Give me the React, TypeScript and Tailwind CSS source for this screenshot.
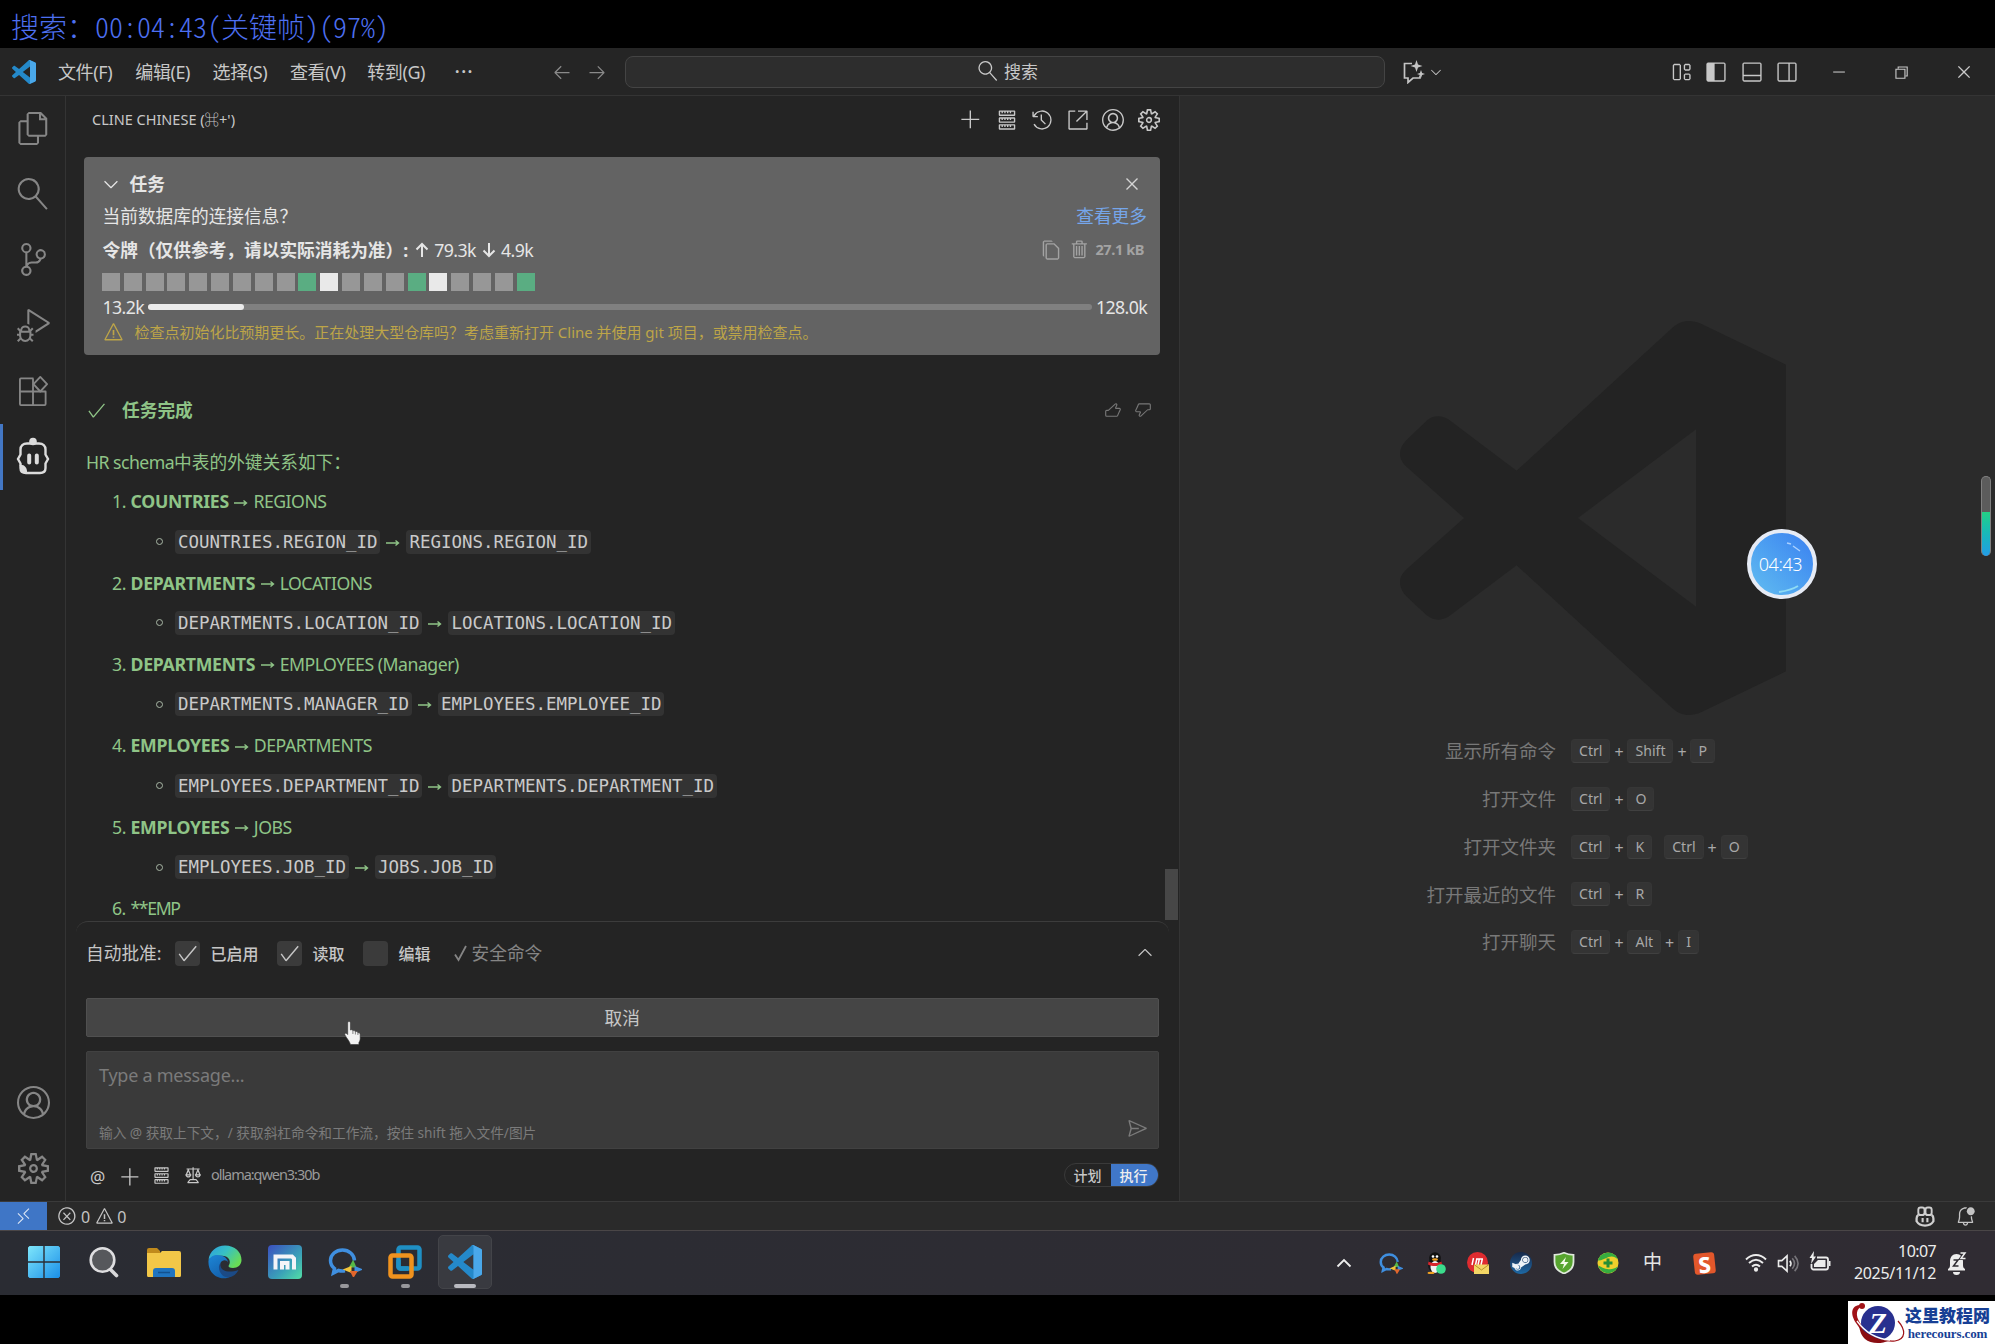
import classNames from 'clsx';
import type { ReactNode } from 'react';
import { FaSteamSymbol } from 'react-icons/fa';
import {
  VscAccount,
  VscAdd,
  VscArrowLeft,
  VscArrowRight,
  VscBellDot,
  VscCheck,
  VscChevronDown,
  VscChevronUp,
  VscChromeClose,
  VscChromeMinimize,
  VscChromeRestore,
  VscClose,
  VscCopy,
  VscDebugAlt,
  VscError,
  VscFiles,
  VscHistory,
  VscLaw,
  VscLayout,
  VscLayoutPanelOff,
  VscLayoutSidebarLeft,
  VscLayoutSidebarRightOff,
  VscLinkExternal,
  VscRemote,
  VscSearch,
  VscSend,
  VscServer,
  VscSettingsGear,
  VscSourceControl,
  VscThumbsdown,
  VscThumbsup,
  VscTrash,
  VscWarning,
} from 'react-icons/vsc';

type Relation = {
  from: string;
  to: string;
  source: string;
  target: string;
};

const relations: Relation[] = [
  {
    from: 'COUNTRIES',
    to: 'REGIONS',
    source: 'COUNTRIES.REGION_ID',
    target: 'REGIONS.REGION_ID',
  },
  {
    from: 'DEPARTMENTS',
    to: 'LOCATIONS',
    source: 'DEPARTMENTS.LOCATION_ID',
    target: 'LOCATIONS.LOCATION_ID',
  },
  {
    from: 'DEPARTMENTS',
    to: 'EMPLOYEES (Manager)',
    source: 'DEPARTMENTS.MANAGER_ID',
    target: 'EMPLOYEES.EMPLOYEE_ID',
  },
  {
    from: 'EMPLOYEES',
    to: 'DEPARTMENTS',
    source: 'EMPLOYEES.DEPARTMENT_ID',
    target: 'DEPARTMENTS.DEPARTMENT_ID',
  },
  {
    from: 'EMPLOYEES',
    to: 'JOBS',
    source: 'EMPLOYEES.JOB_ID',
    target: 'JOBS.JOB_ID',
  },
];

const shortcuts: { label: string; chords: string[][] }[] = [
  { label: '显示所有命令', chords: [['Ctrl', 'Shift', 'P']] },
  { label: '打开文件', chords: [['Ctrl', 'O']] },
  {
    label: '打开文件夹',
    chords: [
      ['Ctrl', 'K'],
      ['Ctrl', 'O'],
    ],
  },
  { label: '打开最近的文件', chords: [['Ctrl', 'R']] },
  { label: '打开聊天', chords: [['Ctrl', 'Alt', 'I']] },
];

// g = checkpoint, w = user message, everything else is a plain step
const timeline = 'xxxxxxxxxgwxxxgwxxxg'.split('');

const LOGO_OUTLINE =
  'M70.9 99.3c1.6.6 3.4.6 5-.2l20.6-9.9c2.1-1 3.5-3.2 3.5-5.6V16.4c0-2.4-1.4-4.6-3.5-5.6L75.9.9c-2.1-1-4.6-.8-6.4.5-.3.2-.5.4-.7.7L29.4 38 12.2 25c-1.6-1.2-3.8-1.1-5.3.2L1.4 30.3c-1.9 1.6-1.9 4.5 0 6.1L16.2 50 1.4 63.6c-1.9 1.6-1.9 4.5 0 6.1l5.5 5.1c1.5 1.3 3.7 1.4 5.3.2l17.2-13 39.4 35.9c.6.6 1.3 1.1 2.1 1.4ZM75 27.3 45.1 50 75 72.7V27.3Z';

function CodeLogo({ className }: { className?: string }) {
  return (
    <svg viewBox="0 0 100 100" className={className}>
      <path d={LOGO_OUTLINE} fill="#2489ca" fillRule="evenodd" />
      <path
        d="M75.9 99.1c-2.4 1.2-5.3.7-7.1-1.2 2.3 2.3 6.2.7 6.2-2.6V4.7c0-3.3-3.9-4.9-6.2-2.6C70.6.2 73.5-.3 75.9.9l20.6 9.9c2.1 1 3.5 3.2 3.5 5.6v67.2c0 2.4-1.4 4.6-3.5 5.6Z"
        fill="#4aa8ea"
      />
    </svg>
  );
}

function ChatSparkle() {
  return (
    <svg viewBox="0 0 22 24" className="w-[22px] h-6 shrink-0">
      <path
        d="M9 3.5H1.5V18H5v4.5L10 18h7v-2.5"
        fill="none"
        stroke="#c4c4c4"
        strokeWidth="1.7"
      />
      <path
        d="M13.5 0 15 4.5 19.5 6 15 7.5 13.5 12 12 7.5 7.5 6 12 4.5ZM18 10l1.1 2.9L22 14l-2.9 1.1L18 18l-1.1-2.9L14 14l2.9-1.1Z"
        fill="#c4c4c4"
      />
    </svg>
  );
}

function Extensions() {
  return (
    <svg
      viewBox="0 0 32 32"
      className="size-[31px]"
      fill="none"
      stroke="currentColor"
      strokeWidth="1.9"
      strokeLinejoin="round"
    >
      <path d="M16 2.5H3a1 1 0 0 0-1 1V29a1 1 0 0 0 1 1h24.5a1 1 0 0 0 1-1V16H2M15.5 2.5V30" />
      <path d="m23 1 7 7.5-7 7.5-7-7.5Z" />
    </svg>
  );
}

function Robot() {
  return (
    <svg viewBox="0 0 34 40" className="w-[34px] h-10 -mt-[2px]">
      <circle cx="17" cy="5.5" r="3.8" fill="#dcdcdc" />
      <path
        d="M11 7.500h12c4 0 6.500 2.500 6.500 6v5l2.500 4.500-2.500 4.500v4.500c0 3.500-2 5-5.500 5H10c-3.500 0-5.500-1.500-5.500-5v-4.500L2 23l2.500-4.500v-5c0-3.500 2.500-6 6.500-6Z"
        fill="none"
        stroke="#dcdcdc"
        strokeWidth="2.4"
      />
      <path
        d="M13.200 19.500v7M20.800 19.500v7"
        stroke="#dcdcdc"
        strokeWidth="4"
        strokeLinecap="round"
      />
      <path d="M3.500 29c4-1 8 2 7.500 8L5.500 36Z" fill="#dcdcdc" />
    </svg>
  );
}

function Copilot() {
  return (
    <svg viewBox="0 0 20 22" className="w-5 h-[21px]" fill="none" stroke="#cfcfcf">
      <rect x="3" y="1.5" width="6.5" height="8" rx="2.5" strokeWidth="2" />
      <rect x="10.5" y="1.5" width="6.5" height="8" rx="2.5" strokeWidth="2" />
      <path
        d="M3 9.500c-1.500 1-1.800 2-1.800 3.500v3c1.500 2.500 5 4.500 8.800 4.500s7.300-2 8.800-4.500v-3c0-1.500-.3-2.500-1.800-3.500"
        strokeWidth="2.4"
      />
      <path d="M7.500 12.500v4.500M12.500 12.500v4.500" strokeWidth="2.2" />
    </svg>
  );
}

function TitleBar() {
  const menus = ['文件(F)', '编辑(E)', '选择(S)', '查看(V)', '转到(G)'];
  return (
    <header className="flex items-center h-12 shrink-0 border-b border-[#343434] bg-[#252525] text-[#c8c8c8]">
      <CodeLogo className="w-6 h-6 ml-3 mr-[22px] shrink-0" />
      <nav className="flex items-center text-[18px]">
        {menus.map((menu) => (
          <span key={menu} className="w-[77.3px] pt-px tracking-[-0.4px]">
            {menu}
          </span>
        ))}
        <span className="w-[108px] pl-[10px] pb-[11px] text-[20px] leading-none font-medium tracking-[1px]">
          ...
        </span>
      </nav>
      <div className="flex items-center gap-[15px] text-[#8a8a8a]">
        <VscArrowLeft className="size-5" />
        <VscArrowRight className="size-5" />
      </div>
      <div className="flex items-center justify-center gap-[6px] ml-[18px] w-[760px] h-8 pl-[5px] rounded-lg border border-[#444] bg-[#2d2d2d] text-[17px]">
        <VscSearch className="size-[20px] -mt-[2px] -scale-x-100" />
        <span className="pt-px">搜索</span>
      </div>
      <div className="flex items-center gap-[3px] ml-[18px]">
        <ChatSparkle />
        <VscChevronDown className="size-4" />
      </div>
      <div className="flex items-center gap-[13.5px] ml-auto mr-[32px]">
        <VscLayout className="size-[22px]" />
        <VscLayoutSidebarLeft className="size-[22px]" />
        <VscLayoutPanelOff className="size-[22px]" />
        <VscLayoutSidebarRightOff className="size-[22px]" />
      </div>
      <div className="flex items-center gap-[45px] mr-[22px]">
        <VscChromeMinimize className="size-[17px]" />
        <VscChromeRestore className="size-[18px]" />
        <VscChromeClose className="size-[18px]" />
      </div>
    </header>
  );
}

function ActivityItem({
  active,
  children,
}: {
  active?: boolean;
  children: ReactNode;
}) {
  return (
    <div
      className={classNames(
        'flex items-center justify-center h-[65.6px] border-l-[3px] pr-[2px] shrink-0',
        active ? 'border-[#4377c4] text-[#dcdcdc]' : 'border-transparent',
      )}
    >
      {children}
    </div>
  );
}

function ActivityBar() {
  return (
    <aside className="flex flex-col w-[66px] shrink-0 border-r border-[#343434] text-[#868686]">
      <ActivityItem>
        <VscFiles className="size-[33px]" />
      </ActivityItem>
      <ActivityItem>
        <VscSearch className="size-[32px] -scale-x-100" />
      </ActivityItem>
      <ActivityItem>
        <VscSourceControl className="size-[33px]" />
      </ActivityItem>
      <ActivityItem>
        <VscDebugAlt className="size-[33px]" />
      </ActivityItem>
      <ActivityItem>
        <Extensions />
      </ActivityItem>
      <ActivityItem active>
        <Robot />
      </ActivityItem>
      <div className="mt-auto">
        <ActivityItem>
          <VscAccount className="size-[33px]" />
        </ActivityItem>
        <ActivityItem>
          <VscSettingsGear className="size-[31px]" />
        </ActivityItem>
      </div>
    </aside>
  );
}

function TaskPanel() {
  return (
    <section className="ml-[17.5px] mr-[18.5px] mt-[13px] h-[198px] shrink-0 rounded-[4px] bg-[#636363] pt-[10px] pl-[19px] pr-[13px] text-[17.7px] text-[#e6e6e6]">
      <div className="flex items-center h-[34px]">
        <VscChevronDown className="size-[22px] -ml-[3px] mr-[8px]" />
        <span className="font-bold">任务</span>
        <VscClose className="size-[22px] ml-auto mr-[4px] text-[#d4d4d4]" />
      </div>
      <div className="flex items-center justify-between h-[30px]">
        <span>当前数据库的连接信息？</span>
        <span className="text-[#75a6ea]">查看更多</span>
      </div>
      <div className="flex items-center h-[38px]">
        <span className="font-bold">令牌（仅供参考，请以实际消耗为准）:</span>
        <span className="flex items-center gap-[5px] ml-[7px] tracking-[-0.55px]">
          <Arrow up />
          79.3k
          <span className="ml-px">
            <Arrow />
          </span>
          4.9k
        </span>
        <div className="flex items-center ml-auto mr-[3px] text-[#a3a3a3]">
          <VscCopy className="size-[22px] mr-[7px]" />
          <VscTrash className="size-[22px] mr-[4px]" />
          <span className="text-[14.5px] font-bold tracking-[-0.4px]">27.1 kB</span>
        </div>
      </div>
      <div className="flex gap-[3.84px] mt-1 -ml-[0.5px] h-[18px]">
        {timeline.map((kind, i) => (
          <div
            key={i}
            className={classNames(
              'w-[18px]',
              kind === 'g' && 'bg-[#5aad82]',
              kind === 'w' && 'bg-[#e9e9e9]',
              kind === 'x' && 'bg-[#979797]',
            )}
          />
        ))}
      </div>
      <div className="flex items-center gap-1 h-[32px] tracking-[-0.6px]">
        <span>13.2k</span>
        <div className="flex-1 h-[6px] rounded-full bg-[#808080]">
          <div className="h-full w-[96px] rounded-full bg-[#ececec]" />
        </div>
        <span>128.0k</span>
      </div>
      <div className="flex items-center h-[18px] text-[15px] text-[#bda548]">
        <VscWarning className="size-[21px] mr-[11px]" />
        <span className="tracking-[-0.02px]">
          检查点初始化比预期更长。正在处理大型仓库吗？考虑重新打开 Cline
          并使用 git 项目，或禁用检查点。
        </span>
      </div>
    </section>
  );
}

function Arrow({ up }: { up?: boolean }) {
  return (
    <svg
      viewBox="0 0 14 16"
      className={classNames('w-[14px] h-4', !up && 'rotate-180')}
      fill="none"
      stroke="currentColor"
      strokeWidth="2"
    >
      <path d="M7 15V2M1.5 7.5 7 2l5.5 5.5" />
    </svg>
  );
}

function ThinArrow() {
  return (
    <svg
      viewBox="0 0 14 10"
      className="inline-block w-[14px] h-[10px] mt-[2px] shrink-0"
      fill="none"
      stroke="currentColor"
      strokeWidth="1.4"
    >
      <path d="M0 5h12.5M9.5 2.5l3 2.5-3 2.5" />
    </svg>
  );
}

function Code({ children }: { children: ReactNode }) {
  return (
    <code className="px-[3px] h-6 leading-6 rounded-[4px] bg-[#333] font-['DejaVu_Sans_Mono',monospace] text-[17.45px] text-[#cacaca]">
      {children}
    </code>
  );
}

function Messages() {
  return (
    <section className="flex flex-1 min-h-0 overflow-hidden text-[17.7px] text-[#8fc487]">
      <div className="flex-1 pl-[20px] pr-[13px] pt-[39px]">
        <div className="flex items-center h-8">
          <VscCheck className="size-[21px] mr-[15px]" />
          <span className="font-bold">任务完成</span>
          <div className="flex gap-3 ml-auto text-[#777]">
            <VscThumbsup className="size-[18px]" />
            <VscThumbsdown className="size-[18px]" />
          </div>
        </div>
        <div className="flex items-center h-8 mt-5">
          <span className="tracking-[-0.55px]">HR schema</span>
          中表的外键关系如下：
        </div>
        <ol className="mt-[4px]">
          {relations.map((relation, i) => (
            <li key={i} className="h-[81.4px]">
              <div className="flex items-center h-[39px] pl-[26px] tracking-[-0.5px]">
                <span className="w-[18.5px]">{i + 1}.</span>
                <strong className="font-bold tracking-[-0.3px]">
                  {relation.from}
                </strong>
                <span className="flex ml-[5.5px] mr-[5px]">
                  <ThinArrow />
                </span>
                <span>{relation.to}</span>
              </div>
              <div className="flex items-center h-[41px] pl-[70px]">
                <span className="size-[7px] mr-[12px] rounded-full border border-[#a9b7a6]" />
                <Code>{relation.source}</Code>
                <span className="flex mx-[6px]">
                  <ThinArrow />
                </span>
                <Code>{relation.target}</Code>
              </div>
            </li>
          ))}
          <li className="flex items-center h-[39px] pl-[26px] tracking-[-0.5px]">
            <span className="w-[18.5px]">6.</span>
            <span className="tracking-[-1.4px]">**EMP</span>
          </li>
        </ol>
      </div>
      <div className="flex flex-col justify-end w-[14px] pb-px pr-px">
        <div className="h-[51px] bg-[#474747]" />
      </div>
    </section>
  );
}

function CheckOption({ label, checked }: { label: string; checked?: boolean }) {
  return (
    <label className="flex items-center gap-[11px]">
      <span className="flex items-center justify-center w-[25px] h-[25px] rounded-[4px] bg-[#3b3b3b]">
        {checked && <VscCheck className="size-[23px]" />}
      </span>
      <span className="text-[16px] font-medium">{label}</span>
    </label>
  );
}

function AutoApprove() {
  return (
    <div className="flex items-center h-16 mx-[10px] px-[10px] rounded-t-[12px] border-t border-[#3c3c3c] text-[17.7px] text-[#c6c6c6]">
      <span className="mr-[13px]">自动批准:</span>
      <div className="flex gap-[18px]">
        <CheckOption label="已启用" checked />
        <CheckOption label="读取" checked />
        <CheckOption label="编辑" />
      </div>
      <span className="flex items-center ml-[23px] text-[#858585]">
        <svg viewBox="0 0 14 18" className="w-[14px] h-[18px] mr-1" fill="none">
          <path d="M1 10.5 4.5 16 12 2" stroke="currentColor" strokeWidth="1.8" />
        </svg>
        安全命令
      </span>
      <VscChevronUp className="size-[22px] ml-auto mr-[3px] -mt-[2px]" />
    </div>
  );
}

function Composer() {
  return (
    <div className="flex flex-col mx-5 text-[#c8c8c8]">
      <button className="h-[39px] mt-[13px] pt-[2px] rounded-[2px] border border-[#505050] bg-[#454545] text-[17.7px]">
        取消
      </button>
      <div className="flex flex-col justify-between h-[98px] mt-[14px] rounded-[2px] border border-[#414141] bg-[#3a3a3a] pt-[8px] pb-[3px] pl-[12px] pr-[10px] text-[#7b7b7b]">
        <span className="text-[18px] leading-[30px] tracking-[-0.25px]">
          Type a message...
        </span>
        <div className="flex items-center justify-between h-6 text-[13.7px]">
          <span className="tracking-[-0.02px]">
            输入 @ 获取上下文，/ 获取斜杠命令和工作流，按住 shift 拖入文件/图片
          </span>
          <VscSend className="size-[21px] -mt-[10px]" />
        </div>
      </div>
      <div className="flex items-center h-[52px]">
        <span className="w-[34px] pl-[4px] pt-[3px] text-[17px]">@</span>
        <VscAdd className="size-[21px] mr-[11px] mt-[4px]" />
        <VscServer className="size-[19px] mr-[12px]" />
        <VscLaw className="size-[19px] mr-[9px]" />
        <span className="text-[14.5px] text-[#9a9a9a] tracking-[-1.05px]">
          ollama:qwen3:30b
        </span>
        <div className="flex ml-auto h-6 rounded-full border border-[#3a3a3a] overflow-hidden text-[14px] font-medium leading-[23px]">
          <span className="w-[46px] pl-[9px]">计划</span>
          <span className="w-[47px] pl-[9px] bg-[#4077c8] text-[#eee]">执行</span>
        </div>
      </div>
    </div>
  );
}

function SidePanel() {
  return (
    <main className="flex flex-col w-[1113.5px] shrink-0 border-r border-[#343434]">
      <div className="flex items-center h-12 shrink-0 pl-[26px] pr-[19px] text-[#c8c8c8]">
        <span className="text-[14.5px]">CLINE CHINESE (⌘+')</span>
        <div className="flex gap-[13.5px] ml-auto">
          <VscAdd className="size-[22px]" />
          <VscServer className="size-[22px]" />
          <VscHistory className="size-[22px]" />
          <VscLinkExternal className="size-[22px]" />
          <VscAccount className="size-[22px]" />
          <VscSettingsGear className="size-[22px]" />
        </div>
      </div>
      <TaskPanel />
      <Messages />
      <AutoApprove />
      <Composer />
    </main>
  );
}

function Key({ children }: { children: ReactNode }) {
  return (
    <kbd className="h-6 leading-[22px] px-[7px] rounded-[4px] border border-[#363636] border-b-[#404040] bg-[#343434] font-[inherit] text-[14.1px] text-[#a8a8a8]">
      {children}
    </kbd>
  );
}

function EditorArea() {
  return (
    <section className="flex-1 bg-[#2b2b2b] pt-[225px]">
      <svg
        viewBox="0 0 100 100"
        preserveAspectRatio="none"
        className="w-[386px] h-[394px] ml-[220.5px]"
      >
        <path
          d="M100 11.1V88.9L78 99.3C75 100.6 72.5 100 70.5 98.2L30.2 62 12.6 75C10.5 76.2 8.5 76 6.9 74.7L1.7 69.9C-.6 67.5-.6 65 1.7 63L16.6 50 1.7 37C-.6 35-.6 32.5 1.7 30.2L6.9 25.3C8.5 24 10.5 23.8 12.6 25L30.2 38 70.5 1.8C72.5 0 75-.6 78 .7ZM76.7 27.5 46.1 50 76.7 72.5Z"
          fill="#232323"
          fillRule="evenodd"
        />
      </svg>
      <div className="flex flex-col mt-[12.5px]">
        {shortcuts.map(({ label, chords }) => (
          <div key={label} className="flex items-center h-[47.7px]">
            <span className="w-[376.5px] mr-[15px] text-right text-[18.5px] text-[#787878]">
              {label}
            </span>
            <div className="flex gap-[12px]">
              {chords.map((keys, i) => (
                <div key={i} className="flex items-center">
                  {keys.map((key, j) => (
                    <div key={key} className="flex items-center">
                      {j > 0 && (
                        <span className="w-[17px] pt-[2px] text-center text-[16px] text-[#a8a8a8]">
                          +
                        </span>
                      )}
                      <Key>{key}</Key>
                    </div>
                  ))}
                </div>
              ))}
            </div>
          </div>
        ))}
      </div>
    </section>
  );
}

function StatusBar() {
  return (
    <footer className="flex items-center h-[29px] shrink-0 border-t border-[#3a3a3a] bg-[#2a2a2a] text-[#c4c4c4] text-[16px]">
      <div className="flex items-center justify-center w-[47px] h-full mr-[10px] bg-[#3f76c6] text-[#dfe8f5]">
        <VscRemote className="size-[19px]" />
      </div>
      <VscError className="size-[20px]" />
      <span className="ml-1 mr-[5px] pt-px">0</span>
      <VscWarning className="size-[19px]" />
      <span className="ml-[3px] pt-px">0</span>
      <div className="flex items-center gap-[20px] ml-auto mr-[19px]">
        <Copilot />
        <VscBellDot className="size-[21px]" />
      </div>
    </footer>
  );
}

function ChatBubble({ className }: { className: string }) {
  return (
    <svg viewBox="0 0 34 30" className={className} fill="none">
      <path
        d="M26.5 13.5C26 7.5 21 3 14.5 3 8 3 2.5 7.5 2.5 13.5c0 3.5 1.5 6 4 8L5.5 26l5-2.5c2 .6 4 .7 6.5.3"
        stroke="#3f8fe0"
        strokeWidth="3.5"
      />
      <path d="m25 15 2 4.5h-4.5Z" fill="#57b947" stroke="#57b947" strokeWidth="2" />
      <path d="m17.5 22.5 5-2v4Z" fill="#f2c43a" stroke="#f2c43a" strokeWidth="2" />
      <path d="m32.5 22.5-5-2v4Z" fill="#3f8fe0" stroke="#3f8fe0" strokeWidth="2" />
      <path d="m25.5 29-2-4h4.5Z" fill="#e2662c" stroke="#e2662c" strokeWidth="2" />
    </svg>
  );
}

function Windows() {
  return (
    <svg viewBox="0 0 32 32" className="size-8">
      <defs>
        <linearGradient id="win" x1="0" y1="0" x2="1" y2="1">
          <stop offset="0" stopColor="#7ee6fb" />
          <stop offset="1" stopColor="#1a8fe8" />
        </linearGradient>
      </defs>
      <path
        d="M1.5 0H15.3V15.3H0V1.5ZM16.7 0H30.5L32 1.5V15.3H16.7ZM0 16.7H15.3V32H1.5L0 30.5ZM16.7 16.7H32V30.5L30.5 32H16.7Z"
        fill="url(#win)"
      />
    </svg>
  );
}

function TaskSearch() {
  return (
    <svg viewBox="0 0 30 32" className="w-[30px] h-8">
      <path d="m20 22 7.5 7.5" stroke="#d8d8da" strokeWidth="3.6" strokeLinecap="round" />
      <circle cx="13.5" cy="14" r="11.8" fill="#56585c" stroke="#dedee0" strokeWidth="2.6" />
    </svg>
  );
}

function Folder() {
  return (
    <svg viewBox="0 0 34 30" className="w-[34px] h-[30px]">
      <path d="M0 3a2 2 0 0 1 2-2h8l3 3v4H0Z" fill="#c08a1c" />
      <path d="M0 6h13l2-2h17a2 2 0 0 1 2 2v22.500a1.500 1.500 0 0 1-1.500 1.500h-31A1.500 1.500 0 0 1 0 28.500Z" fill="#f2c748" />
      <path d="M6 30v-6a3 3 0 0 1 3-3h16a3 3 0 0 1 3 3v6Z" fill="#1f74c0" />
      <path d="M11 25.5h12" stroke="#12518f" strokeWidth="1.5" />
    </svg>
  );
}

function Edge() {
  return (
    <svg viewBox="0 0 34 34" className="size-[34px]">
      <defs>
        <linearGradient id="edge-top" x1="0" y1="0" x2="1" y2=".6">
          <stop offset="0" stopColor="#2d9de0" />
          <stop offset=".5" stopColor="#37c0c4" />
          <stop offset="1" stopColor="#69dc55" />
        </linearGradient>
        <linearGradient id="edge-low" x1="0" y1="0" x2=".6" y2="1">
          <stop offset="0" stopColor="#1d86d6" />
          <stop offset="1" stopColor="#1460ac" />
        </linearGradient>
      </defs>
      <path
        d="M.5 15C1.5 6 8.5.5 17 .5 27 .5 33.5 7 33.5 15c0 5-4 8-8.5 8-3.5 0-5-1.2-4.3-2.5 2.3-3 1.3-8.5-4.7-9.5C9 10 2.5 12 .5 15Z"
        fill="url(#edge-top)"
      />
      <path
        d="M.5 15.5C2.5 10.5 8 9 13 10.5c4 1 7 4 7 7-1-3-6-3-7.5.5-2 5 3 13 11 13-9 6-24 0-23-15.5Z"
        fill="url(#edge-low)"
      />
      <path d="M12.5 18c-1.5 7 6.5 11 18 7-2 4-5 6.5-10 7.5-8 0-12-10-8-14.5Z" fill="#1b4a86" />
    </svg>
  );
}

function Maxthon() {
  return (
    <svg viewBox="0 0 34 34" className="size-[34px]">
      <defs>
        <linearGradient id="mx" x1="0" y1="0" x2="1" y2="1">
          <stop offset="0" stopColor="#3b4fc0" />
          <stop offset=".6" stopColor="#3aa0b8" />
          <stop offset="1" stopColor="#52dfa6" />
        </linearGradient>
      </defs>
      <rect width="34" height="34" rx="4" fill="url(#mx)" />
      <path d="M7.5 24.5V11.500h16.5l2 2v11M14 24.500V18h5.500v6.500" fill="none" stroke="#f4f4f8" strokeWidth="4" />
    </svg>
  );
}

function VMware() {
  return (
    <svg viewBox="0 0 34 34" className="size-[34px]" fill="none" strokeWidth="4.5">
      <rect x="10.5" y="2.5" width="21" height="21" rx="2" stroke="#1f8fc4" />
      <rect x="2.5" y="10.5" width="21" height="21" rx="2" stroke="#f0921e" />
      <path d="M10.5 15v6.5a2 2 0 0 0 2 2H20" stroke="#1f8fc4" />
    </svg>
  );
}

function TaskItem({
  running,
  active,
  children,
}: {
  running?: boolean;
  active?: boolean;
  children: ReactNode;
}) {
  return (
    <div
      className={classNames(
        'flex flex-col items-center w-[54px] h-[54px] pt-[9px] rounded-[5px] border',
        active ? 'bg-[#393a40] border-[#434449]' : 'border-transparent',
      )}
    >
      <div className="flex items-center justify-center h-[34px] shrink-0">{children}</div>
      {(running || active) && (
        <div
          className={classNames(
            'h-1 mt-[5px] rounded-full',
            active ? 'w-[22px] bg-[#b9bac0]' : 'w-[9px] bg-[#98989c]',
          )}
        />
      )}
    </div>
  );
}

function Tray() {
  return (
    <div className="flex items-center">
      <svg viewBox="0 0 16 10" className="w-4 h-[10px] mr-[27px]" fill="none">
        <path d="m1.5 8.5 6.5-6.5 6.5 6.5" stroke="#eee" strokeWidth="1.8" />
      </svg>
      <ChatBubble className="w-[24px] h-[22px] mr-[23px]" />
      <svg viewBox="0 0 20 22" className="w-5 h-[22px] mr-[21px]">
        <ellipse cx="9" cy="13" rx="7" ry="8" fill="#16181c" />
        <circle cx="9" cy="6" r="5.8" fill="#111" />
        <ellipse cx="9" cy="15" rx="4.5" ry="6" fill="#f1f1f1" />
        <circle cx="7" cy="4.5" r="1.3" fill="#fff" />
        <circle cx="11" cy="4.5" r="1.3" fill="#fff" />
        <ellipse cx="9" cy="7.5" rx="3" ry="1.2" fill="#f0a020" />
        <path d="M2.5 9.5c4 2 9 2 13 0l.5 3c-4 2-10 2-14 0Z" fill="#d8262c" />
        <ellipse cx="5" cy="21" rx="3.5" ry="1.2" fill="#f0a020" />
        <circle cx="15" cy="17" r="4.8" fill="#3bdc8c" />
      </svg>
      <svg viewBox="0 0 22 22" className="size-[22px] mr-[21px]">
        <circle cx="10.5" cy="10.5" r="10.5" fill="#df2b2f" />
        <path d="M5 13 6.5 6M8.5 13 9.8 7M11 13l1.3-6M14 13l1.3-6M9 7h7" stroke="#fff" strokeWidth="1.5" />
        <rect x="7" y="12.5" width="15" height="9.5" fill="#f3d665" />
        <path d="m7 12.5 7.5 5.5 7.5-5.5" fill="none" stroke="#b8922a" />
      </svg>
      <span className="flex items-center justify-center size-[22px] mr-[21px] rounded-full bg-gradient-to-b from-[#16294a] to-[#1c69a5]">
        <FaSteamSymbol className="size-[20px] text-[#eef3f8]" />
      </span>
      <svg viewBox="0 0 22 22" className="size-[22px] mr-[22px]">
        <path d="M11 .8c3 1.5 6 2 9.5 2V10c0 6-4 9.5-9.5 11.5C5.5 19.5 1.5 16 1.5 10V2.8c3.5 0 6.500-.5 9.500-2Z" fill="#57a52f" stroke="#dfe8dc" strokeWidth="1.8" />
        <path d="m13 5-6 7h4l-1.5 5 6-7h-4Z" fill="#f4fbe9" />
      </svg>
      <svg viewBox="0 0 22 22" className="size-[22px] mr-[24px]">
        <circle cx="11" cy="11" r="10.5" fill="#f0cf2c" />
        <path d="M.8 8.5C2.5 2.5 8 0 13 .8c4 .7 7 3.5 8 6.7-3-3-6-3.8-9.5-2.5C7.5 6.5 4 9 .8 8.5ZM1 13.5c2 5.5 6.5 8 11 7.7 4.5-.5 7.5-3.2 8.7-6.7-3 2-6 3.2-9 2.7C7 17 4 14.5 1 13.5Z" fill="#36ad3f" />
        <path d="M11 6.5v9M6.5 11h9" stroke="#258f35" strokeWidth="3" />
      </svg>
      <span className="mr-[32px] -mt-[2px] text-[19px] text-[#e6e6e6]">中</span>
      <span className="flex items-center justify-center size-[21px] mr-[30px] rounded-[3px] -rotate-6 bg-[#e2572b] text-white text-[22px] leading-none font-extrabold">
        S
      </span>
      <svg viewBox="0 0 22 20" className="w-[22px] h-5 mr-[10px] -mt-[2px]" fill="none" stroke="#ececec" strokeWidth="1.9">
        <path d="M1 7.5c6-6 14-6 20 0M4 11c4.5-4.2 9.5-4.2 14 0M7 14.5c2.5-2.3 5.5-2.3 8 0" />
        <circle cx="11" cy="17.5" r="1.2" fill="#ececec" />
      </svg>
      <svg viewBox="0 0 22 20" className="w-[22px] h-[19px] mr-[10px]" fill="none" stroke="#ececec" strokeWidth="1.7">
        <path d="M1 7h3.5L10 2v16l-5.5-5H1Z" />
        <path d="M13 7c1.5 2 1.5 4 0 6" />
        <path d="M15.5 4.5c3 3.500 3 7.500 0 11M18 2c4.500 5 4.500 11 0 16" stroke="#77757a" />
      </svg>
      <svg viewBox="0 0 22 22" className="size-[22px] mr-[19px] -mt-[3px]">
        <path d="M8 6.5h9a2 2 0 0 1 2 2v8a2 2 0 0 1-2 2H4.5a2 2 0 0 1-2-2V13" fill="none" stroke="#ececec" strokeWidth="1.8" />
        <path d="M9 9h7.5v7H5v-3Z" fill="#ececec" />
        <path d="M20 10h1.5v5H20ZM5 0 .5 7H3l-1 6 5-7.5H4.5Z" fill="#ececec" />
      </svg>
      <div className="flex flex-col items-end w-[86px] -mt-[2px] text-[16px] leading-[22px] tracking-[-0.3px] text-[#ececec]">
        <span className="tracking-[-0.6px]">10:07</span>
        <span>2025/11/12</span>
      </div>
      <svg viewBox="0 0 22 26" className="w-[22px] h-[26px] ml-[11px] mr-[26px]">
        <path d="M1 20.500v-1.500c1.500-1 2-2 2-4v-3.500C3 7 5.500 4 9.500 4S16 7 16 11.500V15c0 2 .5 3 2 4v1.500ZM6 22h7a3.500 3 0 0 1-7 0Z" fill="#eee" />
        <path d="M6.500 10h4.500l-4.500 6h5" fill="none" stroke="#2f2c32" strokeWidth="1.5" />
        <path d="M13.500 3h4.500l-4 5.500h4.500" fill="none" stroke="#2f2c32" strokeWidth="3.2" />
        <path d="M13.500 3h4.500l-4 5.500h4.500" fill="none" stroke="#eee" strokeWidth="1.5" />
      </svg>
    </div>
  );
}

function Taskbar() {
  return (
    <div className="flex items-center justify-between h-[65px] shrink-0 border-t border-[#4a4647] bg-gradient-to-r from-[#2a2c33] to-[#302c33]">
      <div className="flex gap-[6.2px] pl-[17px] -mt-[2px]">
        <TaskItem>
          <Windows />
        </TaskItem>
        <TaskItem>
          <TaskSearch />
        </TaskItem>
        <TaskItem>
          <Folder />
        </TaskItem>
        <TaskItem>
          <Edge />
        </TaskItem>
        <TaskItem>
          <Maxthon />
        </TaskItem>
        <TaskItem running>
          <ChatBubble className="w-[34px] h-[30px]" />
        </TaskItem>
        <TaskItem running>
          <VMware />
        </TaskItem>
        <TaskItem active>
          <CodeLogo className="size-[34px]" />
        </TaskItem>
      </div>
      <Tray />
    </div>
  );
}

function SiteBadge() {
  return (
    <div className="flex items-center w-[147px] h-[43px] bg-white text-[#173f95]">
      <svg viewBox="0 0 57 43" className="w-[57px] h-[43px] shrink-0">
        {/* red comet tail runs behind the disc and comes out at the lower right */}
        <path d="M15 4C4 3 1 11 8 22c7 11 17 19 30 19-10-4-19-10-26-19C7 14 8 8 15 4Z" fill="#a01217" />
        <path d="M50 20c8 9 8 18-3 20-8 1-18-3-26-9" fill="none" stroke="#a01217" strokeWidth="1.2" />
        <circle cx="30" cy="22" r="17" fill="#28308f" />
        <path d="M11 25c7 8 17 13 29 15-6 3-18 3-23-2-4-4-5-8-6-13Z" fill="#8a0d12" />
        <path d="M9 20c8 11 19 18 33 19" fill="none" stroke="#fff" strokeWidth="1.3" />
        <circle cx="14" cy="5" r="3" fill="#a01217" />
        <text
          x="30"
          y="32"
          textAnchor="middle"
          className="font-['Liberation_Serif',serif] text-[29px] font-bold italic"
          fill="#fff"
        >
          Z
        </text>
      </svg>
      <div className="flex flex-col items-center">
        <span className="text-[17px] leading-[22px] font-black">这里教程网</span>
        <span className="font-['Liberation_Serif',serif] text-[13px] leading-[14px] font-bold tracking-[-0.1px]">
          herecours.com
        </span>
      </div>
    </div>
  );
}

export default function App() {
  return (
    <div className="relative flex flex-col w-[1995px] h-[1344px] overflow-hidden bg-black font-['Noto_Sans','Noto_Sans_CJK_SC',sans-serif]">
      <div className="flex items-center h-12 shrink-0 pl-[11px] pt-[3px] font-['Noto_Sans_CJK_SC',sans-serif] text-[28px] font-light text-[#4d6ff0] [font-feature-settings:'hwid']">
        搜索：00:04:43(关键帧)(97%)
      </div>
      <TitleBar />
      <div className="flex flex-1 min-h-0 bg-[#242424]">
        <ActivityBar />
        <SidePanel />
        <EditorArea />
      </div>
      <StatusBar />
      <Taskbar />
      <div className="flex justify-end h-[49px] shrink-0 pt-[6px]">
        <SiteBadge />
      </div>

      {/* floating recorder widgets */}
      <div className="absolute left-[1747px] top-[529px] flex items-center justify-center size-[70px] pr-[3px] rounded-full border-4 border-[#e6ebf5] bg-gradient-to-tr from-[#62bdf0] to-[#3b7ff0] text-[18px] font-light tracking-[-0.4px] text-white">
        04:43
        <svg viewBox="0 0 62 62" className="absolute inset-0" fill="none">
          <path d="M36 10l4 1M42 13l7 5" stroke="#a9d0ff" strokeWidth="1.5" />
          <path d="M28 59c7-1 14-3 19-6" stroke="#8fdcf5" strokeWidth="2" />
        </svg>
      </div>
      <div className="absolute left-[1981px] top-[476px] flex flex-col w-[10px] h-20 rounded-full overflow-hidden border border-b-0 border-[#808080] bg-[#5c5c5c]">
        <div className="mt-auto -mx-px h-[44px] bg-gradient-to-b from-[#25cf84] to-[#259be6]" />
      </div>
      {/* mouse pointer */}
      <svg
        viewBox="0 0 18 26"
        className="absolute left-[344px] top-[1020px] w-[18px] h-[26px]"
      >
        <path
          d="M5 1.5c1 0 1.4.7 1.4 1.6V10c.8-.6 2.3-.3 2.5.8.8-.5 2.2-.2 2.5.9 1-.5 2.2 0 2.5 1.1 1.3-.3 2.3.3 2.3 1.7v4c0 2-.8 3-1.3 4v2H6.5C5.5 21 2.5 18 .8 14.8c-.4-1.5.9-2.1 2-1.1l.9.9V3.1c0-.9.4-1.6 1.3-1.6Z"
          fill="#f2f2f2"
          stroke="#333"
          strokeWidth=".6"
        />
        <path d="M8.9 11v3M11.4 12v2.5M13.9 13v2" stroke="#555" strokeWidth=".7" />
      </svg>
    </div>
  );
}
